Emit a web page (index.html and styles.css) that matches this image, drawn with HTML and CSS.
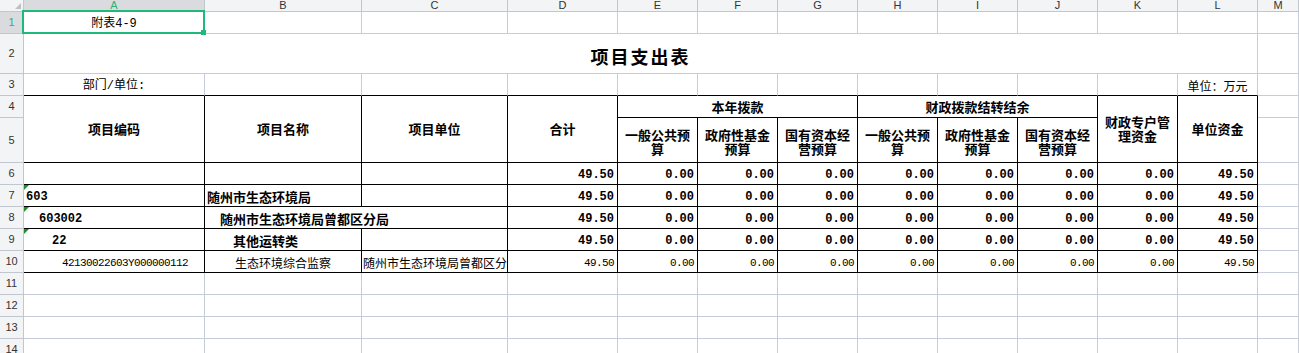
FILE: index.html
```html
<!DOCTYPE html>
<html lang="zh-CN">
<head>
  <meta charset="UTF-8" />
  <title>项目支出表</title>
  <link rel="stylesheet" href="styles.css">
</head>
<body>
  <div class="sheet">
    <!-- column headers -->
    <div class="c hdr corner"></div>
    <div class="c hdr sel">A</div>
    <div class="c hdr">B</div>
    <div class="c hdr">C</div>
    <div class="c hdr">D</div>
    <div class="c hdr">E</div>
    <div class="c hdr">F</div>
    <div class="c hdr">G</div>
    <div class="c hdr">H</div>
    <div class="c hdr">I</div>
    <div class="c hdr">J</div>
    <div class="c hdr">K</div>
    <div class="c hdr">L</div>
    <div class="c hdr">M</div>

    <!-- row 1 -->
    <div class="c rh sel">1</div>
    <div class="c ctr mix a1">附表4-9</div>
    <div class="c"></div><div class="c"></div><div class="c"></div><div class="c"></div>
    <div class="c"></div><div class="c"></div><div class="c"></div><div class="c"></div>
    <div class="c"></div><div class="c"></div><div class="c"></div><div class="c"></div>

    <!-- row 2 -->
    <div class="c rh">2</div>
    <div class="c title span12">项目支出表</div>
    <div class="c"></div>

    <!-- row 3 -->
    <div class="c rh">3</div>
    <div class="c ctr mix kb">部门/单位:</div>
    <div class="c kb"></div><div class="c kb"></div><div class="c kb"></div><div class="c kb"></div>
    <div class="c kb"></div><div class="c kb"></div><div class="c kb"></div><div class="c kb"></div>
    <div class="c kb"></div><div class="c kb"></div>
    <div class="c ctr kb">单位：万元</div>
    <div class="c"></div>

    <!-- row 4 -->
    <div class="c rh">4</div>
    <div class="c k hd rows2">项目编码</div>
    <div class="c k hd rows2">项目名称</div>
    <div class="c k hd rows2">项目单位</div>
    <div class="c k hd rows2">合计</div>
    <div class="c k hd span3">本年拨款</div>
    <div class="c k hd span3">财政拨款结转结余</div>
    <div class="c k hd rows2">财政专户管理资金</div>
    <div class="c k hd rows2">单位资金</div>
    <div class="c"></div>

    <!-- row 5 -->
    <div class="c rh">5</div>
    <div class="c k hd sub">一般公共预算</div>
    <div class="c k hd sub">政府性基金预算</div>
    <div class="c k hd sub">国有资本经营预算</div>
    <div class="c k hd sub">一般公共预算</div>
    <div class="c k hd sub">政府性基金预算</div>
    <div class="c k hd sub">国有资本经营预算</div>
    <div class="c"></div>

    <!-- row 6 -->
    <div class="c rh">6</div>
    <div class="c k"></div>
    <div class="c k"></div>
    <div class="c k"></div>
    <div class="c k num">49.50</div>
    <div class="c k num">0.00</div>
    <div class="c k num">0.00</div>
    <div class="c k num">0.00</div>
    <div class="c k num">0.00</div>
    <div class="c k num">0.00</div>
    <div class="c k num">0.00</div>
    <div class="c k num">0.00</div>
    <div class="c k num">49.50</div>
    <div class="c"></div>

    <!-- row 7 -->
    <div class="c rh">7</div>
    <div class="c k b code tri">603</div>
    <div class="c k b">随州市生态环境局</div>
    <div class="c k"></div>
    <div class="c k num">49.50</div>
    <div class="c k num">0.00</div>
    <div class="c k num">0.00</div>
    <div class="c k num">0.00</div>
    <div class="c k num">0.00</div>
    <div class="c k num">0.00</div>
    <div class="c k num">0.00</div>
    <div class="c k num">0.00</div>
    <div class="c k num">49.50</div>
    <div class="c"></div>

    <!-- row 8 -->
    <div class="c rh">8</div>
    <div class="c k b code tri i1">603002</div>
    <div class="c k b i1 span2">随州市生态环境局曾都区分局</div>
    <div class="c k num">49.50</div>
    <div class="c k num">0.00</div>
    <div class="c k num">0.00</div>
    <div class="c k num">0.00</div>
    <div class="c k num">0.00</div>
    <div class="c k num">0.00</div>
    <div class="c k num">0.00</div>
    <div class="c k num">0.00</div>
    <div class="c k num">49.50</div>
    <div class="c"></div>

    <!-- row 9 -->
    <div class="c rh">9</div>
    <div class="c k b code tri i2">22</div>
    <div class="c k b i2">其他运转类</div>
    <div class="c k"></div>
    <div class="c k num">49.50</div>
    <div class="c k num">0.00</div>
    <div class="c k num">0.00</div>
    <div class="c k num">0.00</div>
    <div class="c k num">0.00</div>
    <div class="c k num">0.00</div>
    <div class="c k num">0.00</div>
    <div class="c k num">0.00</div>
    <div class="c k num">49.50</div>
    <div class="c"></div>

    <!-- row 10 -->
    <div class="c rh">10</div>
    <div class="c k lite itemcode">42130022603Y000000112</div>
    <div class="c k ctr">生态环境综合监察</div>
    <div class="c k tight">随州市生态环境局曾都区分</div>
    <div class="c k num lite">49.50</div>
    <div class="c k num lite">0.00</div>
    <div class="c k num lite">0.00</div>
    <div class="c k num lite">0.00</div>
    <div class="c k num lite">0.00</div>
    <div class="c k num lite">0.00</div>
    <div class="c k num lite">0.00</div>
    <div class="c k num lite">0.00</div>
    <div class="c k num lite">49.50</div>
    <div class="c"></div>

    <!-- rows 11-14 -->
    <div class="c rh">11</div>
    <div class="c"></div><div class="c"></div><div class="c"></div><div class="c"></div><div class="c"></div>
    <div class="c"></div><div class="c"></div><div class="c"></div><div class="c"></div><div class="c"></div>
    <div class="c"></div><div class="c"></div><div class="c"></div>

    <div class="c rh">12</div>
    <div class="c"></div><div class="c"></div><div class="c"></div><div class="c"></div><div class="c"></div>
    <div class="c"></div><div class="c"></div><div class="c"></div><div class="c"></div><div class="c"></div>
    <div class="c"></div><div class="c"></div><div class="c"></div>

    <div class="c rh">13</div>
    <div class="c"></div><div class="c"></div><div class="c"></div><div class="c"></div><div class="c"></div>
    <div class="c"></div><div class="c"></div><div class="c"></div><div class="c"></div><div class="c"></div>
    <div class="c"></div><div class="c"></div><div class="c"></div>

    <div class="c rh">14</div>
    <div class="c"></div><div class="c"></div><div class="c"></div><div class="c"></div><div class="c"></div>
    <div class="c"></div><div class="c"></div><div class="c"></div><div class="c"></div><div class="c"></div>
    <div class="c"></div><div class="c"></div><div class="c"></div>
  </div>
</body>
</html>
```

FILE: styles.css
```css
:root {
  --grid: #c7ccdb;
  --head-line: #c2c6ce;
  --head-bg: #f3f4f6;
  --sel-bg: #d9dbdf;
  --green: #1fb97b;
}

body {
  margin: 0;
  background: #fff;
  overflow: hidden;
  font-family: "Noto Sans CJK SC", sans-serif;
  color: #000;
}

.sheet {
  display: grid;
  grid-template-columns: 24px 181px 157px 146px 110px repeat(8, 80px) 1fr;
  grid-template-rows: 12px 22px 40px 22px 22px 45px repeat(9, 22px);
}

.c {
  box-sizing: border-box;
  min-width: 0;
  display: flex;
  align-items: flex-end;
  padding: 0 2px 2px;
  border-right: 1px solid var(--grid);
  border-bottom: 1px solid var(--grid);
  font-size: 12px;
  line-height: 14px;
  white-space: nowrap;
  overflow: hidden;
}

/* headers */
.hdr,
.rh {
  background: var(--head-bg);
  border-color: var(--head-line);
  align-items: center;
  justify-content: center;
  padding: 0;
  font-family: "Liberation Sans", sans-serif;
  font-size: 11px;
  line-height: 11px;
  color: #333;
}

.hdr.sel,
.rh.sel {
  background: var(--sel-bg);
  color: #2bb377;
}

.corner {
  position: relative;
}

.corner::after {
  content: "";
  position: absolute;
  right: 2px;
  bottom: 2px;
  border-bottom: 6px solid #bcbfc5;
  border-left: 6px solid transparent;
}

/* selection on A1 */
.a1 {
  position: relative;
  overflow: visible;
}

.a1::after {
  content: "";
  position: absolute;
  left: -2px;
  top: -2px;
  right: -1px;
  bottom: -1px;
  border: 2px solid var(--green);
  z-index: 2;
}

.a1::before {
  content: "";
  position: absolute;
  right: -2px;
  bottom: -2px;
  width: 5px;
  height: 5px;
  background: var(--green);
  z-index: 3;
}

/* merges */
.span12 { grid-column: span 12; }
.span3 { grid-column: span 3; }
.span2 { grid-column: span 2; }
.rows2 { grid-row: span 2; }

.title {
  justify-content: center;
  align-items: center;
  padding: 4px 0 0;
  font-size: 18px;
  line-height: 20px;
  font-weight: bold;
  letter-spacing: 2px;
  border-right-color: var(--grid);
}

/* black borders of the table */
.kb { border-bottom-color: #000; }

.k {
  border-right-color: #000;
  border-bottom-color: #000;
}

.ctr { justify-content: center; }

.mix { font-family: "Liberation Mono", "Noto Sans CJK SC", monospace; }

.tight { padding-left: 1px; padding-right: 0; }

.hd {
  align-items: center;
  justify-content: center;
  text-align: center;
  white-space: normal;
  padding: 0 3px;
  font-size: 13px;
  font-weight: bold;
}

.hd.sub { padding-top: 4px; }

.b {
  font-size: 13px;
  font-weight: bold;
}

.code {
  font-family: "Liberation Mono", monospace;
  font-size: 12px;
}

.i1 { padding-left: 15px; }
.i2 { padding-left: 28px; }

.tri { position: relative; }

.tri::before {
  content: "";
  position: absolute;
  left: 0;
  top: 0;
  border-top: 5px solid #1f8f2c;
  border-right: 5px solid transparent;
}

.num {
  justify-content: flex-end;
  padding-right: 3px;
  font-family: "Liberation Mono", monospace;
  font-size: 12px;
  font-weight: bold;
}

.lite {
  font-family: "Liberation Mono", monospace;
  font-size: 11px;
  font-weight: normal;
  letter-spacing: -0.6px;
}

.itemcode { padding-left: 38px; }
```
